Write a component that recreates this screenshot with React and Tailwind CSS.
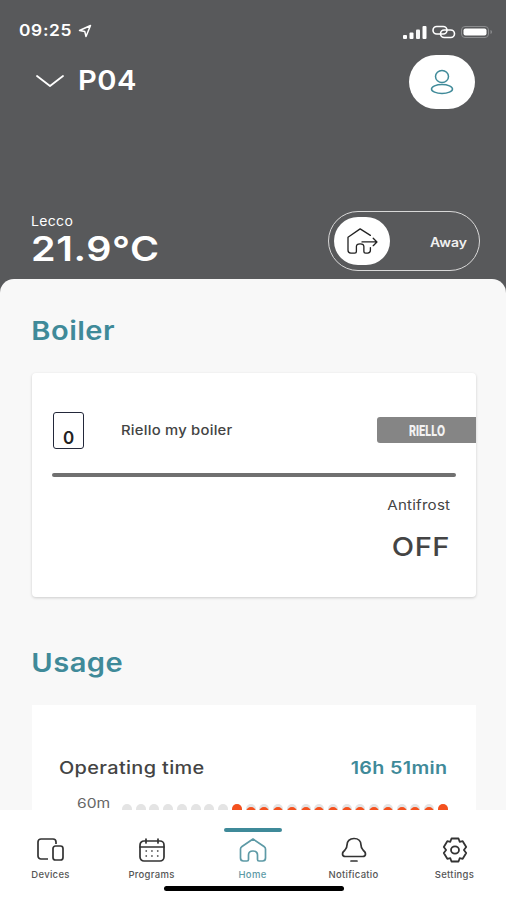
const sans = 'font-["Inter",sans-serif]'

const DOTS = Array.from({ length: 24 }, (_, i) => i)

function StatusBar() {
  return (
    <div className="flex h-[41px] items-end justify-between pl-[19px] pr-[13px]">
      <div className="flex items-center gap-[4px]">
        <span className="origin-left scale-x-[1.12] text-[15.5px] font-semibold leading-[20px] tracking-[0.6px] text-white">09:25</span>
        <svg className="ml-[7px]" width="14" height="14" viewBox="0 0 14 14" fill="none" stroke="#fff" strokeWidth="1.5" strokeLinejoin="round">
          <path d="M1.5 6.5 12.5 1.5 8 12.5 6.8 7.6Z" />
        </svg>
      </div>
      <div className="flex items-center gap-[5px] pb-[2px]">
        <svg width="24" height="13" viewBox="0 0 24 13" fill="#fff">
          <rect x="0" y="9" width="4" height="4" rx="1" />
          <rect x="6.5" y="6.5" width="4" height="6.5" rx="1" />
          <rect x="13" y="3.5" width="4" height="9.5" rx="1" opacity="0.95" />
          <rect x="19.5" y="0" width="4" height="13" rx="1" />
        </svg>
        <svg width="24" height="14" viewBox="0 0 24 14" fill="none" stroke="#fff" strokeWidth="1.6">
          <rect x="1" y="1.5" width="14" height="7.5" rx="3.75" />
          <rect x="8.5" y="5" width="14" height="7.5" rx="3.75" />
        </svg>
        <svg width="32" height="14" viewBox="0 0 32 14" fill="none">
          <rect x="0.5" y="1.5" width="27" height="11" rx="3.5" stroke="#8b8c8e" />
          <rect x="2.5" y="3.5" width="23" height="7" rx="2" fill="#fff" />
          <path d="M29.5 5v4c.9-.3 1.5-1.1 1.5-2s-.6-1.700-1.500-2Z" fill="#8b8c8e" />
        </svg>
      </div>
    </div>
  )
}

function Header() {
  return (
    <div className="flex h-[279px] shrink-0 flex-col bg-[#58595b] text-white">
      <StatusBar />
      <div className="flex items-start justify-between pl-[35px] pr-[31px] pt-[14px]">
        <div className="flex items-center gap-[13px] pt-[10px]">
          <svg width="30" height="14" viewBox="0 0 30 14" fill="none" stroke="#fff" strokeWidth="1.8" strokeLinecap="round" strokeLinejoin="round">
            <path d="M2 2 15 12 28 2" />
          </svg>
          <span className="origin-left scale-x-[1.08] text-[27px] font-semibold leading-[32px] tracking-[0.5px]">P04</span>
        </div>
        <div className="flex h-[54px] w-[66px] items-center justify-center rounded-full bg-white">
          <svg width="24" height="26" viewBox="0 0 24 26" fill="none" stroke="#3f8a99" strokeWidth="1.5">
            <ellipse cx="12" cy="7.500" rx="6.500" ry="6" />
            <ellipse cx="12" cy="20" rx="10.500" ry="4.500" />
          </svg>
        </div>
      </div>
      <div className="mt-auto flex items-end justify-between pb-[8px] pl-[31px] pr-[26px]">
        <div className="flex flex-col items-start">
          <span className="mb-[1px] origin-left scale-x-[1.08] text-[13px] leading-[16px] tracking-[0.3px]">Lecco</span>
          <span className="mb-[3px] origin-left scale-x-[1.16] text-[34px] font-semibold leading-[38px] tracking-[0.5px]">21.9°C</span>
        </div>
        <div className="flex h-[60px] w-[152px] items-center justify-between rounded-full border-[1.5px] border-[#d8d8d8] pl-[5px] pr-[12px]">
          <div className="flex h-[48px] w-[56px] items-center justify-center rounded-full bg-white">
            <svg width="36" height="28" viewBox="0 0 38 30" fill="none" stroke="#222" strokeWidth="1.4" strokeLinejoin="round" strokeLinecap="round">
              <path d="M28 9 17 2 4 11v14c0 2 1 3 3 3h4c1.500 0 2-1 2-2v-5c0-2 2-3 4-3s4 1 4 3v5c0 1 1 2 2 2h2c2 0 3-1 3-3v-3" />
              <path d="M19 16h16M31 12l4 4-4 4" />
            </svg>
          </div>
          <span className="origin-right translate-y-[2px] scale-x-[1.12] text-[12.5px] font-semibold text-[#f0f0f0]">Away</span>
        </div>
      </div>
    </div>
  )
}

function BoilerCard() {
  return (
    <div className="ml-[32px] mr-[30px] mt-[24px] h-[224px] rounded-[4px] bg-white shadow-[0_1px_3px_rgba(0,0,0,0.18)]">
      <div className="flex items-start pl-[21px] pt-[39px]">
        <div className="flex h-[37px] w-[31px] items-end justify-center rounded-[3px] border-[1.5px] border-[#23283a]">
          <span className="text-[17px] font-semibold leading-[20px] text-[#222]">0</span>
        </div>
        <span className="ml-[37px] mt-[9px] origin-left scale-x-[1.14] text-[13px] font-medium leading-[18px] tracking-[0.2px] text-[#444]">Riello my boiler</span>
        <div className="ml-auto mt-[5px] flex h-[26px] w-[99px] items-center justify-center rounded-l-[3px] bg-[#858585] pl-[1px]">
          <span className="scale-x-75 text-[14px] font-extrabold text-[#f2f2f2]">RIELLO</span>
        </div>
      </div>
      <div className="ml-[20px] mr-[20px] mt-[24px] h-[3.500px] rounded-full bg-[#707070]" />
      <div className="flex flex-col items-end pr-[26px] pt-[19px]">
        <span className="origin-right scale-x-[1.12] text-[13.500px] leading-[18px] tracking-[0.2px] text-[#444]">Antifrost</span>
        <span className="mt-[17px] origin-right scale-x-[1.12] text-[26px] font-medium leading-[32px] tracking-[0.5px] text-[#444]">OFF</span>
      </div>
    </div>
  )
}

function UsageCard() {
  return (
    <div className="ml-[32px] mr-[30px] mt-[24px] h-[200px] bg-white">
      <div className="flex items-center justify-between pl-[27px] pr-[29px] pt-[52px]">
        <span className="origin-left scale-x-[1.17] text-[17px] font-medium leading-[22px] tracking-[0.3px] text-[#444]">Operating time</span>
        <span className="origin-right scale-x-[1.16] text-[17px] font-semibold leading-[22px] tracking-[0.3px] text-[#3f8a99]">16h 51min</span>
      </div>
      <div className="mt-[18px] flex items-start pl-[45px]">
        <span className="w-[45px] origin-left scale-x-[1.2] text-[13px] leading-[12px] text-[#666]">60m</span>
        <div className="flex gap-[3.740px] pt-[7px]">
          {DOTS.map((i) => {
            const edge = i === 8 || i === 23
            const fill = i > 8
            return (
              <div key={i} className="relative h-[10px] w-[10px] overflow-hidden rounded-full bg-[#e4e4e4]">
                {fill && !edge && <div className="absolute left-0 top-[3px] h-[10px] w-[10px] rounded-full bg-[#f4511e]" />}
                {edge && <div className="absolute inset-0 bg-[#f4511e]" />}
              </div>
            )
          })}
        </div>
      </div>
    </div>
  )
}

function NavItem({ label, active, children }) {
  return (
    <div className="relative flex w-[101px] flex-col items-center pt-[26px]">
      {active && <div className="absolute left-[22px] top-[18px] h-[4px] w-[58px] rounded-full bg-[#3f8a99]" />}
      <div className="flex h-[28px] items-center justify-center">{children}</div>
      <span className={`mt-[5px] text-[9.500px] font-medium leading-[12px] tracking-[0.3px] ${active ? 'text-[#5d9aa6]' : 'text-[#555]'}`}>{label}</span>
    </div>
  )
}

function BottomNav() {
  return (
    <div className="relative flex h-[90px] shrink-0 bg-white">
      <NavItem label="Devices">
        <svg width="28" height="24" viewBox="0 0 28 24" fill="none" stroke="#333" strokeWidth="1.700" strokeLinejoin="round">
          <path d="M11 21H4a3 3 0 0 1-3-3V4a3 3 0 0 1 3-3h12a3 3 0 0 1 3 3v2" />
          <rect x="16" y="8" width="10" height="14" rx="2.500" />
        </svg>
      </NavItem>
      <NavItem label="Programs">
        <svg width="28" height="25" viewBox="0 0 28 25" fill="none" stroke="#333" strokeWidth="1.700" strokeLinecap="round">
          <rect x="2" y="3" width="24" height="20" rx="4" />
          <path d="M2 9h24M8 1v4M20 1v4" />
          <path d="M8 13h.5M13.700 13h.5M19.500 13h.5M8 18h.5M13.700 18h.5M19.500 18h.5" strokeWidth="1.300" />
        </svg>
      </NavItem>
      <NavItem label="Home" active>
        <svg width="28" height="26" viewBox="0 0 28 26" fill="none" stroke="#5d9aa6" strokeWidth="1.700" strokeLinejoin="round">
          <path d="M14 2 3 9.500C2 10.200 1.500 11 1.500 12v9c0 2 1 3 3 3H8c1 0 1.500-.7 1.500-1.500V18c0-2.500 2-4 4.500-4s4.500 1.500 4.500 4v4.500c0 .8.500 1.500 1.500 1.500h3.500c2 0 3-1 3-3v-9c0-1-.5-1.800-1.500-2.500Z" />
        </svg>
      </NavItem>
      <NavItem label="Notificatio">
        <svg width="26" height="26" viewBox="0 0 26 26" fill="none" stroke="#333" strokeWidth="1.700" strokeLinecap="round" strokeLinejoin="round">
          <path d="M13 1.500c-4.500 0-7 3-7 6.500 0 2.500-.7 3.800-2 5-1.500 1.300-2.500 2.500-2.500 4 0 1.500 1 2.500 3 2.500h17c2 0 3-1 3-2.500 0-1.500-1-2.700-2.500-4-1.300-1.200-2-2.500-2-5 0-3.500-2.500-6.500-7-6.500Z" />
          <path d="M10 24h6" />
        </svg>
      </NavItem>
      <NavItem label="Settings">
        <svg width="28" height="26" viewBox="0 0 28 26" fill="none" stroke="#333" strokeWidth="1.800" strokeLinejoin="round">
          <path d="M10.500 1.500h7l1.200 3.300 3-.6 3.500 5.800-2.300 3 2.300 3-3.500 5.800-3-.6-1.200 3.300h-7l-1.200-3.300-3 .6-3.500-5.800 2.300-3-2.300-3 3.500-5.800 3 .6Z" />
          <ellipse cx="14" cy="13" rx="4" ry="3.700" />
        </svg>
      </NavItem>
      <div className="absolute bottom-[9px] left-[164px] h-[5px] w-[180px] rounded-full bg-black" />
    </div>
  )
}

export default function App() {
  return (
    <div className={`flex h-[900px] w-[506px] flex-col overflow-hidden bg-[#58595b] ${sans}`}>
      <Header />
      <div className="min-h-0 flex-1 overflow-hidden rounded-t-[14px] bg-[#f8f8f8]">
        <h2 className="origin-left scale-x-[1.12] pl-[28px] pt-[34px] text-[26px] font-semibold leading-[36px] tracking-[0.4px] text-[#3f8a99]">Boiler</h2>
        <BoilerCard />
        <h2 className="origin-left scale-x-[1.12] pl-[28px] pt-[48px] text-[26px] font-semibold leading-[36px] tracking-[0.4px] text-[#3f8a99]">Usage</h2>
        <UsageCard />
      </div>
      <BottomNav />
    </div>
  )
}
